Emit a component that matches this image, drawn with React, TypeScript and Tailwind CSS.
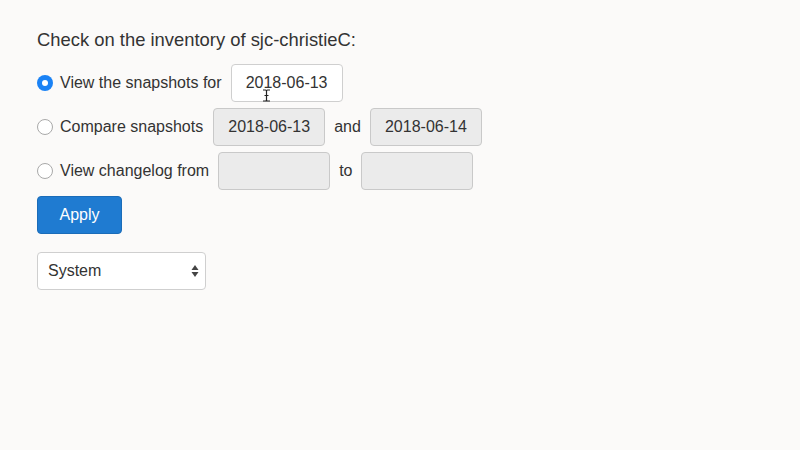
import React from "react";

function Radio({ checked }: { checked?: boolean }) {
  return checked ? (
    <span className="flex h-[16px] w-[16px] shrink-0 items-center justify-center rounded-full bg-[#1a82f5]">
      <span className="h-[6px] w-[6px] rounded-full bg-white" />
    </span>
  ) : (
    <span className="h-[16px] w-[16px] shrink-0 rounded-full border border-[#a9a9a9] bg-white" />
  );
}

function DateBox({ value, disabled, cursor }: { value?: string; disabled?: boolean; cursor?: boolean }) {
  return (
    <div
      className={
        "relative flex h-[38px] w-[112px] shrink-0 items-center justify-center rounded-[4px] border text-[16px] text-[#333] " +
        (disabled ? "border-[#c9c9c9] bg-[#ebebeb]" : "border-[#cfcfcf] bg-white")
      }
    >
      {value}
      {cursor && (
        <svg className="absolute left-[30px] top-[24px]" width="9" height="13" viewBox="0 0 9 13">
          <path d="M1 1 H3.5 Q4.5 1 4.5 2 V11 Q4.5 12 3.5 12 H1 M8 1 H5.5 Q4.5 1 4.5 2 M8 12 H5.5 Q4.5 12 4.5 11 M2.5 6.5 H6.5" fill="none" stroke="#222" strokeWidth="1.2" />
        </svg>
      )}
    </div>
  );
}

export default function App() {
  return (
    <div
      className="h-[450px] w-[800px] bg-[#fbfaf9] pl-[37px] pt-[30px] text-[#333]"
      style={{ fontFamily: '"Liberation Sans", Arial, sans-serif' }}
    >
      <div className="text-[18.4px] leading-[20px]">Check on the inventory of sjc-christieC:</div>

      <div className="mt-[14px] flex flex-col gap-[6px] text-[16px]">
        <div className="flex h-[38px] items-center">
          <Radio checked />
          <span className="ml-[7px] mr-[9px]">View the snapshots for</span>
          <DateBox value="2018-06-13" cursor />
        </div>
        <div className="flex h-[38px] items-center">
          <Radio />
          <span className="ml-[7px] mr-[10px]">Compare snapshots</span>
          <DateBox value="2018-06-13" disabled />
          <span className="mx-[9px]">and</span>
          <DateBox value="2018-06-14" disabled />
        </div>
        <div className="flex h-[38px] items-center">
          <Radio />
          <span className="ml-[7px] mr-[9px]">View changelog from</span>
          <DateBox disabled />
          <span className="mx-[9px]">to</span>
          <DateBox disabled />
        </div>
        <div className="flex">
          <button className="h-[38px] w-[85px] rounded-[4px] border border-[#1b6cb8] bg-[#1f7bd1] text-[16px] text-white">
            Apply
          </button>
        </div>
      </div>

      <div className="mt-[18px] flex h-[38px] w-[169px] items-center justify-between rounded-[4px] border border-[#cfcfcf] bg-white pl-[10px] pr-[6px] text-[16px]">
        <span>System</span>
        <svg width="8" height="14" viewBox="0 0 8 14">
          <path d="M4 1 L7.5 6 H0.5 Z" fill="#444" />
          <path d="M4 13 L7.5 8 H0.5 Z" fill="#444" />
        </svg>
      </div>
    </div>
  );
}
